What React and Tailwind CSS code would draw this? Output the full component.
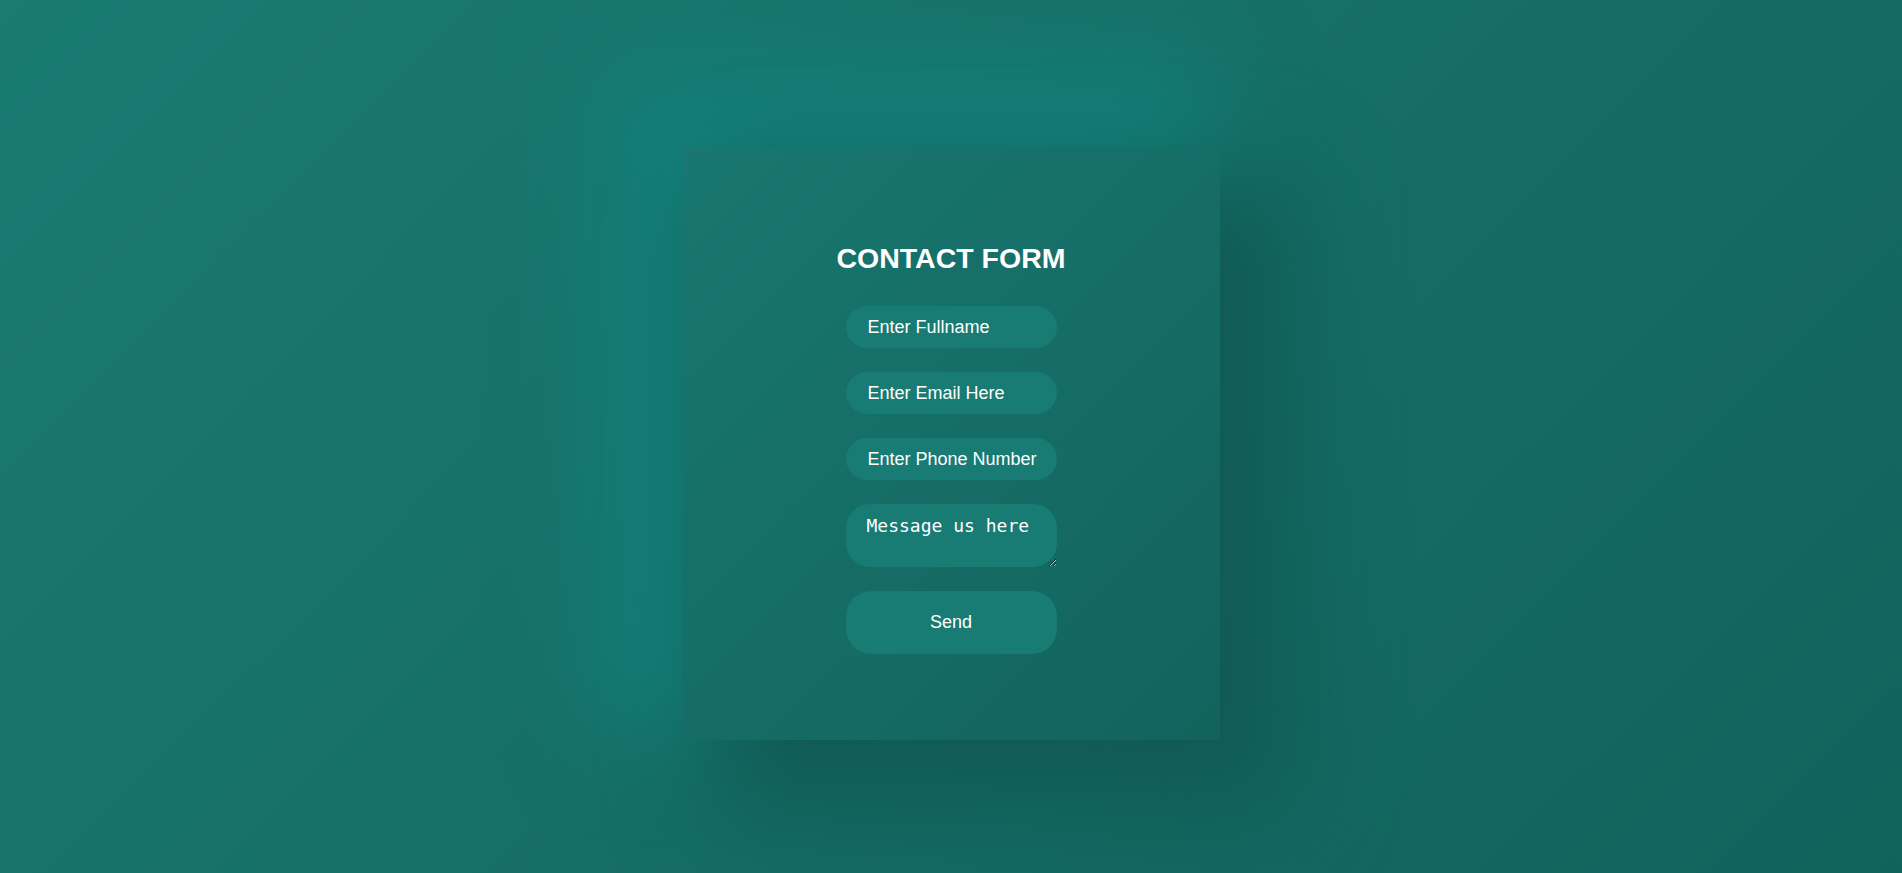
import { useState } from 'react';

const fieldClass =
  "w-[211px] h-[42px] rounded-full bg-[#187b74] pl-[22px] pr-4 text-[18px] leading-[normal] text-white placeholder:text-white outline-none font-['Liberation_Sans',Arial,sans-serif]";

const ContactForm = () => {
  const [form, setForm] = useState({ name: '', email: '', phone: '', message: '' });

  const update = (key) => (e) => setForm({ ...form, [key]: e.target.value });

  const handleSubmit = (e) => {
    e.preventDefault();
  };

  return (
    <div className="w-[537px] h-[593px] flex flex-col items-center pt-[95px] rounded-[5px] bg-[linear-gradient(135deg,#187770,#13635d)] shadow-[50px_50px_100px_20px_#115a54,-45px_-45px_100px_35px_#14807a]">
      <h2 className="m-0 mb-[31px] text-[28.5px] leading-[33px] font-bold text-white font-['Liberation_Sans',Arial,sans-serif]">
        CONTACT FORM
      </h2>
      <form onSubmit={handleSubmit} className="flex flex-col items-center gap-6">
        <input
          type="text"
          placeholder="Enter Fullname"
          value={form.name}
          onChange={update('name')}
          className={fieldClass}
        />
        <input
          type="email"
          placeholder="Enter Email Here"
          value={form.email}
          onChange={update('email')}
          className={fieldClass}
        />
        <input
          type="tel"
          placeholder="Enter Phone Number"
          value={form.phone}
          onChange={update('phone')}
          className={fieldClass}
        />
        <textarea
          placeholder="Message us here"
          value={form.message}
          onChange={update('message')}
          className="w-[211px] h-[63px] rounded-[24px] bg-[#187b74] pt-[11px] pl-[21px] pr-4 text-[18px] leading-[normal] text-white placeholder:text-white outline-none [color-scheme:dark] font-['DejaVu_Sans_Mono',monospace]"
        />
        <button
          type="submit"
          className="w-[211px] h-[63px] rounded-[25px] bg-[#187b74] text-[18px] text-white font-['Liberation_Sans',Arial,sans-serif] cursor-pointer"
        >
          Send
        </button>
      </form>
    </div>
  );
};

export default function App() {
  return (
    <div className="min-h-screen w-full overflow-hidden flex justify-center pt-[147px] bg-[linear-gradient(135deg,#1a7b73,#12625c)]">
      <ContactForm />
    </div>
  );
}
